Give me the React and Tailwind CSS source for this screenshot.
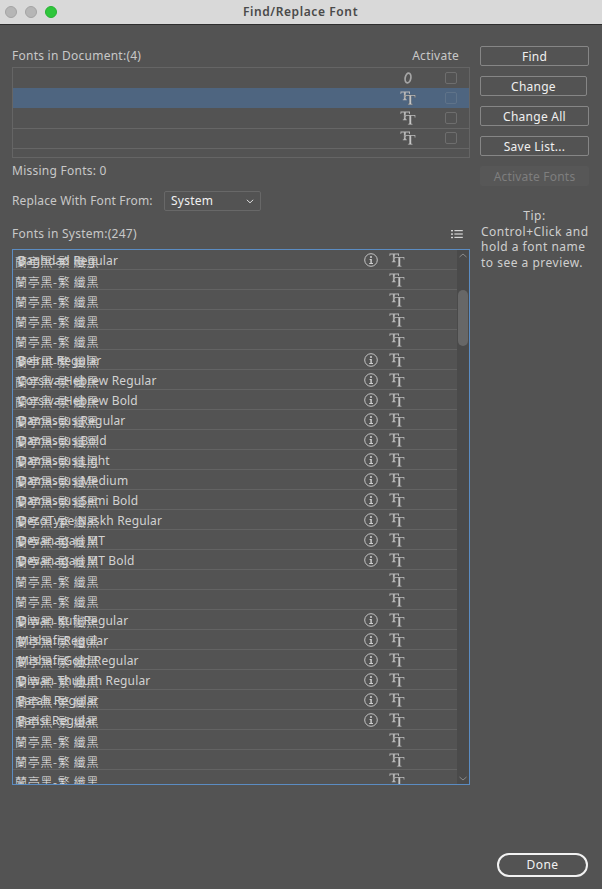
const CJK = '蘭亭黑-繁 纖黑'

// null = only the CJK name, string = latin name drawn on top of it
const SYSTEM_FONTS = [
  'Baghdad Regular', null, null, null, null,
  'Beirut Regular', 'Corsiva Hebrew Regular', 'Corsiva Hebrew Bold',
  'Damascus Regular', 'Damascus Bold', 'Damascus Light', 'Damascus Medium', 'Damascus Semi Bold',
  'DecoType Naskh Regular', 'Devanagari MT', 'Devanagari MT Bold', null, null,
  'Diwan Kufi Regular', 'Mishafi Regular', 'Mishafi Gold Regular', 'Diwan Thuluth Regular',
  'Farah Regular', 'Farisi Regular', null, null, null,
]

function TrueTypeIcon({ className = '' }) {
  return (
    <svg width="16" height="14" viewBox="0 0 16 14" className={className} fill="#d0d0d0">
      <path d="M0.5 0.5H10V3H9.3L8.9 1.5H5.8V8.2L6.8 8.6V9.2H2.8V8.6L3.9 8.2V1.5H1.5L1.1 3H0.5Z" fill="#b8b8b8" />
      <path d="M5 4H15.5V6.8H14.8L14.3 5H11.3V12.5L12.6 13V13.7H7.9V13L9.2 12.5V5H6.2L5.7 6.8H5Z" stroke="#535353" strokeWidth="0.4" />
    </svg>
  )
}

function OpenTypeIcon() {
  return (
    <svg width="12" height="12" viewBox="0 0 12 12" fill="none" stroke="#a6a6a6">
      <ellipse cx="6" cy="6" rx="2.8" ry="5" strokeWidth="1.7" transform="rotate(10 6 6)" />
    </svg>
  )
}

function InfoIcon() {
  return (
    <svg width="14" height="14" viewBox="0 0 14 14" fill="none">
      <circle cx="7" cy="7" r="6.3" stroke="#c4c4c4" />
      <circle cx="7" cy="3.9" r="1" fill="#d0d0d0" />
      <path d="M5.6 6H7.8V10H9V10.9H5.2V10H6.4V6.9H5.6Z" fill="#d0d0d0" />
    </svg>
  )
}

function ListIcon() {
  return (
    <svg width="12" height="10" viewBox="0 0 12 10" fill="#d4d4d4">
      <rect x="0" y="1" width="2" height="1.4" />
      <rect x="3.4" y="1" width="8.4" height="1.2" />
      <rect x="0" y="4.4" width="2" height="1.4" />
      <rect x="3.4" y="4.4" width="8.4" height="1.2" />
      <rect x="0" y="7.8" width="2" height="1.4" />
      <rect x="3.4" y="7.8" width="8.4" height="1.2" />
    </svg>
  )
}

function DocRow({ selected, lined, icon }) {
  return (
    <div className={`h-5 pb-[2px] flex items-center border-t ${selected ? 'bg-[#4e6580] border-[#4e6580]' : lined ? 'border-[#666666]' : 'border-transparent'}`}>
      <div className="w-[387px]" />
      <div className="w-4 flex justify-center">{icon}</div>
      {icon && <div className={`ml-[29px] w-3 h-3 rounded-[2px] border ${selected ? 'border-[#5f7389]' : 'border-[#6e6e6e]'}`} />}
    </div>
  )
}

function SystemRow({ name }) {
  return (
    <div className="h-5 shrink-0 flex items-center border-b border-[#636363]">
      <div className="grid w-[350px] ml-[2px] text-[12px] leading-4 whitespace-nowrap">
        <span className="col-start-1 row-start-1 mt-[4px] text-[#ececec] font-['Noto_Sans_CJK_TC',sans-serif] tracking-[0.7px] font-light">{CJK}</span>
        {name && <span className="col-start-1 row-start-1 mt-[3px] ml-[3px] text-[#d2d2d2] tracking-[0.15px]">{name}</span>}
      </div>
      <div className="w-[14px] -ml-[1px] flex justify-center">{name && <InfoIcon />}</div>
      <TrueTypeIcon className="ml-[11px]" />
    </div>
  )
}

function SideButton({ children, className = '' }) {
  return (
    <button className={`h-5 pt-[1px] border border-[#868686] rounded-[2px] text-[12px] leading-4 text-[#f0f0f0] tracking-[0.25px] ${className}`}>
      {children}
    </button>
  )
}

export default function App() {
  return (
    <div className="w-[602px] h-[889px] flex flex-col bg-[#535353] font-['Noto_Sans',sans-serif] overflow-hidden">
      {/* Title bar */}
      <div className="h-[25px] shrink-0 relative flex items-center bg-[#d9d9d9] border-b border-[#2e2e2e]">
        <div className="flex gap-2 pl-[5px]">
          <span className="w-3 h-3 rounded-full bg-[#b6b6b6] border border-[#a4a4a4]" />
          <span className="w-3 h-3 rounded-full bg-[#b6b6b6] border border-[#a4a4a4]" />
          <span className="w-3 h-3 rounded-full bg-[#2fc63c] border border-[#27b233]" />
        </div>
        <span className="flex-1 text-center -ml-[58px] text-[12px] font-semibold text-[#4a4a4a] tracking-[0.6px]">Find/Replace Font</span>
      </div>

      <div className="flex-1 flex pt-[21px] pl-3">
        {/* Left column */}
        <div className="w-[458px] flex flex-col text-[12px] text-[#c8c8c8] tracking-[0.25px]">
          <div className="h-[21px] pb-[1px] flex justify-between items-center pr-[11px]">
            <span>Fonts in Document:(4)</span>
            <span>Activate</span>
          </div>
          <div className="h-[91px] border border-[#656565] overflow-hidden">
            <DocRow icon={<OpenTypeIcon />} />
            <DocRow selected icon={<TrueTypeIcon />} />
            <DocRow icon={<TrueTypeIcon />} />
            <DocRow lined icon={<TrueTypeIcon />} />
            <DocRow lined />
          </div>
          <div className="mt-[3px] h-5 flex items-center">Missing Fonts: 0</div>
          <div className="mt-[10px] h-5 flex items-center">
            <span className="w-[152px] tracking-[0.15px] pb-[1px]">Replace With Font From:</span>
            <div className="w-[97px] h-5 pl-[6px] pr-[6px] flex items-center justify-between border border-[#686868] rounded-[2px] text-[#f0f0f0]">
              System
              <svg width="8" height="5" viewBox="0 0 8 5" fill="none" stroke="#dcdcdc"><path d="M0.8 0.8L4 3.8L7.2 0.8" /></svg>
            </div>
          </div>
          <div className="mt-[12px] h-5 pt-[1px] flex items-center justify-between pr-[7px]">
            <span>Fonts in System:(247)</span>
            <ListIcon />
          </div>
          <div className="mt-[6px] h-[536px] flex border border-[#5b8cc2] overflow-hidden">
            <div className="w-[444px] flex flex-col">
              {SYSTEM_FONTS.map((name, i) => <SystemRow key={i} name={name} />)}
            </div>
            <div className="w-3 flex flex-col items-center bg-[#4a4a4a]">
              <svg width="8" height="5" viewBox="0 0 8 5" fill="none" stroke="#8a8a8a" className="mt-[3px]"><path d="M0.5 4L4 1L7.5 4" /></svg>
              <div className="w-[10px] h-[56px] mt-[32px] rounded-[5px] bg-[#676767]" />
              <svg width="8" height="5" viewBox="0 0 8 5" fill="none" stroke="#8a8a8a" className="mt-auto mb-[3px]"><path d="M0.5 1L4 4L7.5 1" /></svg>
            </div>
          </div>
        </div>

        {/* Right column */}
        <div className="ml-[10px] w-[110px] flex flex-col">
          <SideButton className="w-[109px]">Find</SideButton>
          <SideButton className="w-[107px] mt-[10px]">Change</SideButton>
          <SideButton className="w-[109px] mt-[10px]">Change All</SideButton>
          <SideButton className="w-[109px] mt-[10px]">Save List...</SideButton>
          <div className="w-[109px] h-5 pt-[1px] mt-[10px] flex items-center justify-center rounded-[2px] bg-[#575757] text-[12px] text-[#7e7e7e] tracking-[0.2px]">Activate Fonts</div>
          <div className="mt-[22px] ml-[1px] w-[109px] text-[12px] leading-[15.5px] text-[#cfcfcf] tracking-[0.5px] whitespace-nowrap">
            <div className="text-center pr-[2px]">Tip:</div>
            Control+Click and<br />hold a font name<br />to see a preview.
          </div>
          <button className="mt-auto mb-3 ml-[17px] w-[91px] h-6 shrink-0 border-2 border-[#f2f2f2] rounded-full text-[12px] text-[#f2f2f2] tracking-[0.5px]">Done</button>
        </div>
      </div>
    </div>
  )
}
